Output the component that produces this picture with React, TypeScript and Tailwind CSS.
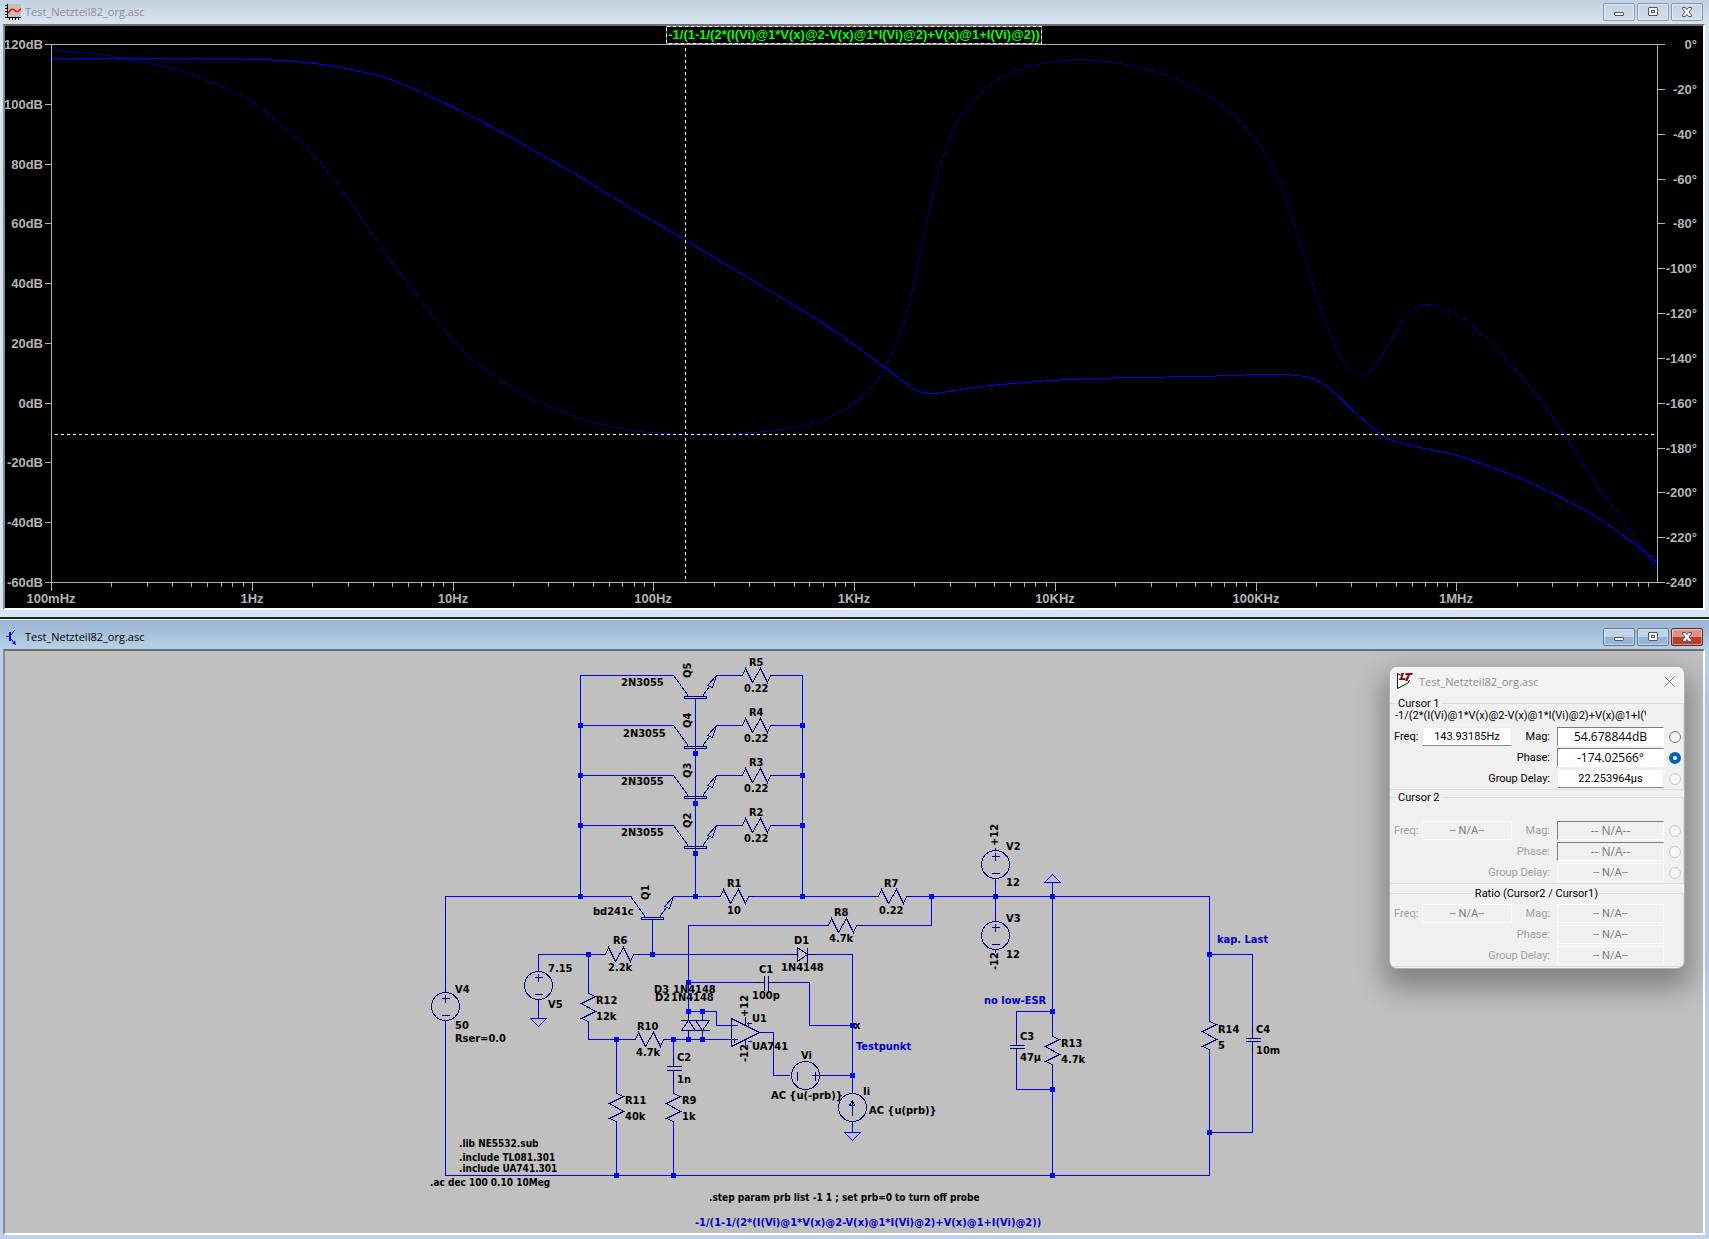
import React, { useState } from 'react';

type Point = [number, number];

const EXPRESSION = '-1/(1-1/(2*(I(Vi)@1*V(x)@2-V(x)@1*I(Vi)@2)+V(x)@1+I(Vi)@2))';
const CURSOR_EXPRESSION = '-1/(2*(I(Vi)@1*V(x)@2-V(x)@1*I(Vi)@2)+V(x)@1+I(Vi)@2)';

const WIRE = '#0000ff';
const SYMBOL = '#000080';

/* ---------- window chrome ---------- */

interface CaptionButtonsProps {
  active?: boolean;
}

function CaptionButtons({ active = false }: CaptionButtonsProps) {
  const base = active
    ? 'border-[#5f7797] bg-linear-to-b from-[#c0d3e9] from-50% to-[#98b4d4] to-50%'
    : 'border-[#8495b0] bg-linear-to-b from-[#c6d4e4] to-[#cfdded]';
  const close = active
    ? 'border-[#5b2626] bg-linear-to-b from-[#dd9486] from-50% to-[#bd3d28] to-50%'
    : base;
  const shared = 'flex h-[18px] w-8 items-center justify-center rounded-[2px] border shadow-[inset_0_0_0_1px_rgba(255,255,255,0.45)]';

  return (
    <div className="flex gap-0.5">
      <button aria-label="Minimize" className={`${shared} ${base}`}>
        <svg width="12" height="12" viewBox="0 0 12 12">
          <rect x="1.5" y="6.5" width="9" height="3" fill="#fff" stroke="#52596a" rx="0.5" />
        </svg>
      </button>
      <button aria-label="Maximize" className={`${shared} ${base}`}>
        <svg width="12" height="12" viewBox="0 0 12 12">
          <rect x="1.5" y="1.5" width="9" height="8" fill="#f4f4f4" stroke="#52596a" rx="0.5" />
          <rect x="4.5" y="4.5" width="3" height="2" fill="#c3d5ea" stroke="#52596a" />
        </svg>
      </button>
      <button aria-label="Close" className={`${shared} ${close}`}>
        <svg width="12" height="12" viewBox="0 0 12 12">
          <path
            d="M1.5 1.5h3l1.5 2 1.5-2h3v1.5l-2.5 3 2.5 3v1.5h-3l-1.5-2-1.5 2h-3v-1.5l2.5-3-2.5-3z"
            fill="#f4f4f4"
            stroke="#52596a"
          />
        </svg>
      </button>
    </div>
  );
}

function PlotIcon() {
  return (
    <svg width="16" height="16" viewBox="0 0 16 16">
      <rect x="2" width="14" height="13" fill="#c0c0c0" />
      <path
        d="M2.5 0v14M2 13.5h14M0 1.5h2M0 4.5h2M0 7.5h2M0 10.5h2M0 13.5h2M4.5 14v2M7.5 14v2M10.5 14v2M13.5 14v2"
        stroke="#000"
        fill="none"
        shapeRendering="crispEdges"
      />
      <path d="M3 9l3-3.500h2.500l2.500 2h2l3-3" stroke="#f00" strokeWidth="1.5" fill="none" />
    </svg>
  );
}

function SchematicIcon() {
  return (
    <svg width="16" height="16" viewBox="0 0 16 16">
      <path d="M1 7.5h4M5 7l5-6M5 9l5 6" stroke={WIRE} fill="none" />
      <path d="M4 3h2v9h-2z" fill={WIRE} />
      <path d="M11 16l-4-1.500 3-3z" fill={WIRE} />
    </svg>
  );
}

function AppLogo() {
  return (
    <svg width="16" height="16" viewBox="0 0 16 16">
      <path d="M.5.5v15l10-6 4.500-9z" fill="#fff" />
      <path d="M3.500 2L.5.5v15L11 10l1.500-3" fill="none" stroke="#111" />
      <path d="M4 0h3l-1.500 5h3l-.5 2h-6l.5-2h1zM8.500 0h7.500l-1 2h-2l-2.500 6h-2.500l2.500-6h-2.500z" fill="#8b0f14" />
    </svg>
  );
}

interface ChildWindowProps {
  icon: React.ReactNode;
  title: string;
  active?: boolean;
  children: React.ReactNode;
}

function ChildWindow({ icon, title, active = false, children }: ChildWindowProps) {
  return (
    <section
      className={
        active
          ? 'border-t border-white bg-linear-to-b from-[#99b4d1] to-[#b9d1ea] to-[30px] pr-1 pb-1 pl-[3px]'
          : 'border-b-2 border-[#22261f] bg-linear-to-b from-[#c3d1df] to-[#d7e4f2] to-[24px] pr-1 pb-[7px] pl-[3px]'
      }
    >
      <header className={`flex items-center justify-between pr-0.5 pl-0.5 ${active ? 'h-[29px] pt-1' : 'h-6'}`}>
        <div className="flex items-center gap-1">
          {icon}
          <h1 className={`font-['Open_Sans',sans-serif] text-[11px] leading-4 ${active ? 'text-black' : 'text-[#8e8e8e]'}`}>
            {title}
          </h1>
        </div>
        <CaptionButtons active={active} />
      </header>
      <div className="relative border-2 border-t-[#6e6e6e] border-r-white border-b-white border-l-[#8a8a8a]">
        {children}
      </div>
    </section>
  );
}

/* ---------- bode plot ---------- */

const LEFT = 51;
const RIGHT = 1657;
const TOP = 44;
const BOTTOM = 582;

const MAGNITUDE: Point[] = [
  [51, 58], [130, 58], [214, 58], [258, 59], [280, 60], [305, 62], [329, 65], [364, 72], [384, 77], [400, 83],
  [424, 93], [451, 106], [487, 124], [509, 136], [570, 171], [628, 206], [685, 240], [752, 280], [818, 320],
  [856, 346], [883, 366], [911, 387], [919, 391], [926, 393], [937, 393], [948, 391], [981, 386], [1024, 382],
  [1068, 379], [1133, 377], [1199, 376], [1264, 374], [1297, 375], [1317, 380], [1335, 393], [1357, 414],
  [1382, 435], [1406, 444], [1460, 456], [1515, 476], [1559, 496], [1597, 517], [1632, 542], [1657, 562],
];

const PHASE: Point[] = [
  [51, 50], [91, 53], [124, 58], [175, 69], [214, 83], [247, 99], [291, 133], [327, 171], [356, 211], [400, 273],
  [435, 319], [472, 359], [512, 388], [545, 405], [589, 421], [632, 430], [685, 434], [741, 433], [785, 428],
  [817, 421], [850, 405], [872, 385], [887, 363], [904, 320], [914, 280], [923, 237], [934, 187], [941, 162],
  [951, 133], [964, 110], [988, 86], [1006, 75], [1028, 66], [1063, 60], [1097, 60], [1140, 67], [1183, 82],
  [1219, 103], [1250, 133], [1275, 171], [1295, 227], [1317, 298], [1332, 338], [1345, 364], [1355, 373],
  [1365, 373], [1377, 362], [1403, 319], [1417, 307], [1429, 304], [1443, 308], [1463, 319], [1493, 345],
  [1530, 387], [1564, 434], [1602, 492], [1635, 538], [1657, 570],
];

// Bezier control points of the Catmull-Rom segment that starts at index i
function controls(points: Point[], i: number): [Point, Point, Point, Point] {
  const p0 = points[Math.max(i - 1, 0)];
  const p1 = points[i];
  const p2 = points[i + 1];
  const p3 = points[Math.min(i + 2, points.length - 1)];
  return [
    p1,
    [p1[0] + (p2[0] - p0[0]) / 6, p1[1] + (p2[1] - p0[1]) / 6],
    [p2[0] - (p3[0] - p1[0]) / 6, p2[1] - (p3[1] - p1[1]) / 6],
    p2,
  ];
}

function solidPath(points: Point[]) {
  let d = `M${points[0][0]} ${points[0][1]}`;
  for (let i = 0; i < points.length - 1; i++) {
    const [, a, b, end] = controls(points, i);
    d += `C${a[0]} ${a[1]} ${b[0]} ${b[1]} ${end[0]} ${end[1]}`;
  }
  return d;
}

// One pixel on, one pixel off, snapped to the pixel grid
function dottedPath(points: Point[]) {
  let d = '';
  let last: Point = [-10, -10];
  for (let i = 0; i < points.length - 1; i++) {
    const [a, b, c, e] = controls(points, i);
    for (let t = 0; t < 1; t += 0.005) {
      const u = 1 - t;
      const at = (k: 0 | 1) =>
        Math.round(u * u * u * a[k] + 3 * u * u * t * b[k] + 3 * u * t * t * c[k] + t * t * t * e[k]);
      const x = at(0);
      const y = at(1);
      if (Math.max(Math.abs(x - last[0]), Math.abs(y - last[1])) >= 2) {
        d += `M${x} ${y}h1v1h-1z`;
        last = [x, y];
      }
    }
  }
  return d;
}

const DB_LABELS = ['120dB', '100dB', '80dB', '60dB', '40dB', '20dB', '0dB', '-20dB', '-40dB', '-60dB'];
const FREQ_LABELS = ['100mHz', '1Hz', '10Hz', '100Hz', '1KHz', '10KHz', '100KHz', '1MHz'];

function BodePlot() {
  const dbStep = (BOTTOM - TOP) / 9;
  const degStep = (BOTTOM - TOP) / 12;
  const decade = (RIGHT - LEFT) / 8;

  const dbY = (i: number) => Math.round(TOP + i * dbStep);
  const degY = (i: number) => Math.round(TOP + i * degStep);

  let ticks = '';
  DB_LABELS.forEach((_, i) => (ticks += `M${LEFT - 7} ${dbY(i)}H${LEFT}`));
  for (let i = 0; i <= 12; i++) ticks += `M${RIGHT} ${degY(i)}h7`;
  for (let dec = 0; dec < 8; dec++) {
    for (let n = 1; n < 10; n++) {
      const x = Math.round(LEFT + (dec + Math.log10(n)) * decade);
      ticks += `M${x} ${BOTTOM}v${n === 1 ? 8 : 4}`;
    }
  }

  return (
    <svg viewBox="5 26 1698 582" className="block h-auto w-full bg-black font-['Liberation_Sans',Arial,sans-serif] text-[13px] font-bold">
      <path d={dottedPath(PHASE)} fill={WIRE} shapeRendering="crispEdges" />
      <g transform="translate(.5 .5)" fill="none" shapeRendering="crispEdges">
        <path d={`M${LEFT} ${TOP}H${RIGHT}V${BOTTOM}H${LEFT}z${ticks}`} stroke="#b4b4b4" />
        <path d={solidPath(MAGNITUDE)} stroke={WIRE} />
        <path d={`M685 ${TOP + 3}V${BOTTOM}`} stroke="#fff" strokeDasharray="3 3" />
        <path d={`M${LEFT + 3} 434H${RIGHT}`} stroke="#fff" strokeDasharray="3 3" />
        <rect x="666" y="26" width="375" height="17" stroke="#808080" fill="#000" />
        <rect x="666" y="26" width="375" height="17" stroke="#fff" strokeDasharray="3 3" />
      </g>
      <g fill="#b4b4b4">
        {DB_LABELS.map((label, i) => (
          <text key={label} x="43" y={dbY(i) + 5} textAnchor="end">{label}</text>
        ))}
        {Array.from({ length: 13 }, (_, i) => (
          <text key={i} x="1697" y={degY(i) + 5} textAnchor="end">{`${i === 0 ? '' : '-'}${i * 20}°`}</text>
        ))}
        {FREQ_LABELS.map((label, i) => (
          <text key={label} x={Math.round(LEFT + i * decade)} y="603" textAnchor="middle">{label}</text>
        ))}
      </g>
      <text x="854" y="39" textAnchor="middle" fill="#00ff00">{EXPRESSION}</text>
    </svg>
  );
}

/* ---------- schematic ---------- */

const resistorH = (x: number, y: number) =>
  `M${x - 5} ${y}h5l3 -7l7 14l8 -14l7 14l3 -7h5`;
const resistorV = (x: number, y: number) =>
  `M${x} ${y - 3}v3l7 3l-14 7l14 8l-14 7l7 3v3`;
const capacitorV = (x: number, y: number, gap: number) =>
  `M${x} ${y - 12}v12M${x - 7} ${y}h15M${x - 7} ${y + gap}h15M${x} ${y + gap}v12`;
const transistor = (b: number, y: number) =>
  `M${b - 22} ${y}l14 19v2M${b - 11} ${y + 21}h22v2h-22zM${b + 8} ${y + 21}v-2l6 -8M${b + 21} ${y}l-9 10l5 2z`;
const source = (x: number, y: number) =>
  `M${x - 4} ${y - 8}h8M${x} ${y - 12}v8M${x - 4} ${y + 9}h8M${x} ${y - 17}v3M${x} ${y + 14}v3`;

const WIRES = [
  // output stage
  'M673 675H580V896M673 725H580M673 775H580M673 825H580',
  'M716 675H738M773 675H802V896M716 725H738M773 725H802M716 775H738M773 775H802M716 825H738M773 825H802',
  'M695 698V896',
  // main rail
  'M445 990V896H631M673 896H716M752 896H874M909 896H1209V1018M1209 1052V1175H445V1022',
  'M652 919V954',
  'M931 896V925H860M824 925H688V1011',
  'M538 969V954H602M636 954H792M813 954H852V1091',
  'M588 954V990M588 1024V1039H632M666 1039H728M538 1001V1018',
  'M688 982H754M778 982H809V1025H852',
  'M688 1011H716V1025H728M702 1011V1017M688 1033V1039M702 1033V1039',
  'M762 1032H773V1075H789M822 1075H852',
  'M616 1039V1090M616 1124V1175M673 1039V1054M673 1082V1090M673 1124V1175',
  // supplies, output load
  'M995 881V918M1052 882V1033M1052 1067V1175',
  'M1052 1011H1016V1033M1016 1060V1089H1052',
  'M1209 954H1252V1026M1252 1053V1132H1209',
  // grounds
  'M530 1018h16l-8 8zM844 1132h16l-8 8zM1044 882h16l-8 -8zM852 1124V1132',
].join('');

const SYMBOLS = [
  transistor(695, 675), transistor(695, 725), transistor(695, 775), transistor(695, 825), transistor(652, 896),
  resistorH(742, 675), resistorH(742, 725), resistorH(742, 775), resistorH(742, 825),
  resistorH(720, 896), resistorH(878, 896), resistorH(828, 925), resistorH(605, 954), resistorH(635, 1039),
  resistorV(588, 993), resistorV(616, 1093), resistorV(673, 1093), resistorV(1052, 1036), resistorV(1209, 1021),
  capacitorV(673, 1066, 4), capacitorV(1016, 1045, 3), capacitorV(1252, 1038, 3),
  source(445, 1006), source(538, 985), source(995, 864), source(995, 935),
  // C1
  'M754 982h10M764 975v15M768 975v15M768 982h10',
  // D1
  'M790 954h7M797 947v14l10 -7zM807 947v15M807 954h8',
  // D2, D3
  'M680 1020h29M680 1030h29M688 1020l-7 10M688 1020l7 10M695 1020l7 10M709 1020l-7 10M688 1011v9M702 1011v9M688 1030v9M702 1030v9',
  // U1
  'M731 1018v28l28 -14zM728 1025h9M728 1039h9M734 1037v5M745 1016v9M745 1039v8M746 1023h5M748 1021v5M747 1041h4M759 1032h4',
  // Vi, Ii
  'M797 1071v9M815 1071v9M811 1075h12M852 1100v15M852 1100l-3 5h5zM852 1089v4M852 1121v4',
].join('');

const CIRCLES: Point[] = [[445, 1006], [538, 985], [995, 864], [995, 935], [805, 1075], [852, 1107]];

const JUNCTIONS: Point[] = [
  [580, 725], [580, 775], [580, 825], [580, 896], [802, 725], [802, 775], [802, 825], [802, 896],
  [695, 753], [695, 803], [695, 853], [695, 896], [931, 896], [995, 896], [1052, 896],
  [588, 954], [652, 954], [688, 982], [688, 1011], [702, 1011], [616, 1039], [673, 1039], [688, 1039], [702, 1039],
  [852, 1025], [852, 1075], [1052, 1011], [1052, 1089], [1052, 1175], [1209, 954], [1209, 1132],
  [616, 1175], [673, 1175],
];

const LABELS: [string, number, number][] = [
  ['R5', 749, 666], ['0.22', 744, 692], ['R4', 749, 716], ['0.22', 744, 742],
  ['R3', 749, 766], ['0.22', 744, 792], ['R2', 749, 816], ['0.22', 744, 842],
  ['2N3055', 621, 686], ['2N3055', 623, 737], ['2N3055', 621, 785], ['2N3055', 621, 836],
  ['bd241c', 593, 915], ['R1', 727, 887], ['10', 727, 914], ['R7', 884, 887], ['0.22', 879, 914],
  ['R8', 834, 916], ['4.7k', 829, 942], ['D1', 794, 944], ['1N4148', 781, 971], ['C1', 759, 973], ['100p', 752, 999],
  ['R6', 613, 944], ['2.2k', 608, 971], ['D3', 654, 993], ['1N4148', 673, 993], ['D2', 655, 1001], ['1N4148', 671, 1001],
  ['R12', 596, 1004], ['12k', 596, 1020], ['R10', 637, 1030], ['4.7k', 636, 1056], ['C2', 677, 1061], ['1n', 677, 1083],
  ['R11', 625, 1104], ['40k', 625, 1120], ['R9', 682, 1104], ['1k', 682, 1120], ['U1', 752, 1022], ['UA741', 752, 1050],
  ['Vi', 801, 1059], ['AC {u(-prb)}', 771, 1099], ['Ii', 863, 1095], ['AC {u(prb)}', 869, 1114], ['x', 854, 1029],
  ['7.15', 548, 972], ['V5', 548, 1008], ['V4', 455, 993], ['50', 455, 1029], ['Rser=0.0', 455, 1042],
  ['V2', 1006, 850], ['12', 1006, 886], ['V3', 1006, 922], ['12', 1006, 958],
  ['C3', 1020, 1040], ['47µ', 1020, 1061], ['R13', 1061, 1047], ['4.7k', 1061, 1063],
  ['R14', 1218, 1033], ['5', 1218, 1049], ['C4', 1256, 1033], ['10m', 1256, 1054],
];

const DIRECTIVES: [string, number, number][] = [
  ['.lib NE5532.sub', 459, 1147], ['.include TL081.301', 459, 1161], ['.include UA741.301', 459, 1172],
  ['.ac dec 100 0.10 10Meg', 430, 1186],
  ['.step param prb list -1 1 ; set prb=0 to turn off probe', 709, 1201],
];

const COMMENTS: [string, number, number][] = [
  ['Testpunkt', 856, 1050], ['kap. Last', 1217, 943], ['no low-ESR', 984, 1004], [EXPRESSION, 695, 1226],
];

const VERTICAL_LABELS: [string, number, number][] = [
  ['Q5', 691, 678], ['Q4', 691, 728], ['Q3', 691, 778], ['Q2', 691, 828], ['Q1', 649, 900],
  ['+12', 998, 846], ['-12', 998, 970], ['+12', 748, 1017], ['-12', 748, 1062],
];

function Schematic() {
  return (
    <svg viewBox="5 651 1698 582" className="block h-auto w-full bg-[#c0c0c0] font-['DejaVu_Sans_Condensed','Open_Sans',sans-serif] text-[11px] font-bold">
      <g transform="translate(.5 .5)" fill="none" shapeRendering="crispEdges">
        <path d={WIRES} stroke={WIRE} />
        <path d={SYMBOLS} stroke={SYMBOL} />
        {CIRCLES.map(([x, y]) => (
          <circle key={`${x}-${y}`} cx={x} cy={y} r="14" stroke={SYMBOL} />
        ))}
      </g>
      <g fill={WIRE} shapeRendering="crispEdges">
        {JUNCTIONS.map(([x, y]) => (
          <rect key={`${x}-${y}`} x={x - 2} y={y - 2} width="5" height="5" />
        ))}
      </g>
      {LABELS.map(([text, x, y]) => (
        <text key={`${x}-${y}`} x={x} y={y}>{text}</text>
      ))}
      {VERTICAL_LABELS.map(([text, x, y]) => (
        <text key={`${x}-${y}`} transform={`translate(${x} ${y}) rotate(-90)`}>{text}</text>
      ))}
      <g className="text-[10px]">
        {DIRECTIVES.map(([text, x, y]) => (
          <text key={text} x={x} y={y}>{text}</text>
        ))}
      </g>
      <g fill="#0000c8">
        {COMMENTS.map(([text, x, y]) => (
          <text key={text} x={x} y={y}>{text}</text>
        ))}
      </g>
    </svg>
  );
}

/* ---------- cursor dialog ---------- */

interface ReadoutProps {
  id: string;
  label: string;
  value: string;
  disabled?: boolean;
  large?: boolean;
  wide?: boolean;
}

function Readout({ id, label, value, disabled = false, large = false, wide = false }: ReadoutProps) {
  const frame = large
    ? 'border-t-[#7a7a7a] border-l-[#7a7a7a] border-r-white border-b-white'
    : disabled
      ? 'border-[#fafafa]'
      : 'border-[#ececec] border-b-[#868686]';
  return (
    <>
      <label
        htmlFor={id}
        className={`${wide ? 'mr-[7px] ml-auto' : 'w-7'} ${disabled ? 'text-[#a0a0a0]' : 'text-black'}`}
      >
        {label}
      </label>
      <input
        id={id}
        readOnly
        disabled={disabled}
        value={value}
        className={`h-[19px] border p-0 text-center ${wide ? 'w-[107px]' : 'w-[90px]'} ${frame} ${
          disabled ? 'bg-[#f0f0f0] text-[#7a7a7a]' : 'bg-white text-black'
        } ${large ? "font-['Open_Sans',sans-serif] text-xs" : ''}`}
      />
    </>
  );
}

interface CursorRadioProps {
  name: string;
  label: string;
  checked?: boolean;
  disabled?: boolean;
  onChange?: () => void;
}

function CursorRadio({ name, label, checked = false, disabled = false, onChange }: CursorRadioProps) {
  return (
    <input
      type="radio"
      name={name}
      aria-label={label}
      checked={checked}
      disabled={disabled}
      onChange={onChange}
      className="mr-0.5 ml-[5px] size-3 appearance-none rounded-full border border-[#767676] bg-[#f6f6f6] checked:border-4 checked:border-[#005fb8] checked:bg-white disabled:border-[#c8c8c8]"
    />
  );
}

function CursorDialog() {
  const [selected, setSelected] = useState('Phase');
  const row = 'flex h-[21px] items-center pl-1';

  return (
    <div
      role="dialog"
      aria-label="Test_Netzteil82_org.asc"
      className="absolute top-[15px] right-[18px] w-[296px] overflow-hidden rounded-lg border border-[#b0b0b0] bg-[#f0f0f0] pb-px font-[Roboto,Arial,sans-serif] text-[11px] leading-[13px] shadow-[0_14px_28px_6px_rgba(0,0,0,0.32)]"
    >
      <header className="flex h-[30px] items-center justify-between bg-[#f3f3f3] pr-[9px] pb-0.5 pl-[7px]">
        <div className="flex items-center gap-1.5">
          <AppLogo />
          <h2 className="font-['Open_Sans',sans-serif] text-[11px] text-[#8e8e8e]">Test_Netzteil82_org.asc</h2>
        </div>
        <button aria-label="Close dialog">
          <svg width="11" height="11" viewBox="0 0 11 11">
            <path d="M.5.5l10 10M10.5.5l-10 10" stroke="#8a8a8a" />
          </svg>
        </button>
      </header>

      <fieldset className="h-[93px] border border-l-0 border-[#dcdcdc]">
        <legend className="ml-1.5 px-0.5">Cursor 1</legend>
        <p className="ml-[5px] h-4 w-[251px] overflow-hidden leading-[11px] whitespace-nowrap">{CURSOR_EXPRESSION}</p>
        <div className={row}>
          <Readout id="c1-freq" label="Freq:" value="143.93185Hz" />
          <Readout id="c1-mag" label="Mag:" value="54.678844dB" large wide />
          <CursorRadio name="c1" label="Magnitude" checked={selected === 'Mag'} onChange={() => setSelected('Mag')} />
        </div>
        <div className={row}>
          <Readout id="c1-phase" label="Phase:" value="-174.02566°" large wide />
          <CursorRadio name="c1" label="Phase" checked={selected === 'Phase'} onChange={() => setSelected('Phase')} />
        </div>
        <div className={row}>
          <Readout id="c1-delay" label="Group Delay:" value="22.253964µs" wide />
          <CursorRadio name="c1" label="Group delay" disabled />
        </div>
      </fieldset>

      <fieldset className="mt-px h-[93px] border border-l-0 border-[#dcdcdc]">
        <legend className="ml-1.5 px-0.5">Cursor 2</legend>
        <div className={`mt-4 ${row}`}>
          <Readout id="c2-freq" label="Freq:" value="-- N/A--" disabled />
          <Readout id="c2-mag" label="Mag:" value="-- N/A--" disabled large wide />
          <CursorRadio name="c2" label="Magnitude 2" disabled />
        </div>
        <div className={row}>
          <Readout id="c2-phase" label="Phase:" value="-- N/A--" disabled large wide />
          <CursorRadio name="c2" label="Phase 2" disabled />
        </div>
        <div className={row}>
          <Readout id="c2-delay" label="Group Delay:" value="-- N/A--" disabled wide />
          <CursorRadio name="c2" label="Group delay 2" disabled />
        </div>
      </fieldset>

      <fieldset className="mt-[3px] h-20 border border-l-0 border-[#dcdcdc]">
        <legend className="mx-auto px-0.5">Ratio (Cursor2 / Cursor1)</legend>
        <div className={`mt-[3px] pr-[19px] ${row}`}>
          <Readout id="r-freq" label="Freq:" value="-- N/A--" disabled />
          <Readout id="r-mag" label="Mag:" value="-- N/A--" disabled wide />
        </div>
        <div className={`pr-[19px] ${row}`}>
          <Readout id="r-phase" label="Phase:" value="-- N/A--" disabled wide />
        </div>
        <div className={`pr-[19px] ${row}`}>
          <Readout id="r-delay" label="Group Delay:" value="-- N/A--" disabled wide />
        </div>
      </fieldset>
    </div>
  );
}

export default function App() {
  return (
    <main className="flex min-h-screen flex-col bg-[#b9d1ea]">
      <ChildWindow icon={<PlotIcon />} title="Test_Netzteil82_org.asc">
        <BodePlot />
      </ChildWindow>
      <ChildWindow icon={<SchematicIcon />} title="Test_Netzteil82_org.asc" active>
        <Schematic />
        <CursorDialog />
      </ChildWindow>
    </main>
  );
}
